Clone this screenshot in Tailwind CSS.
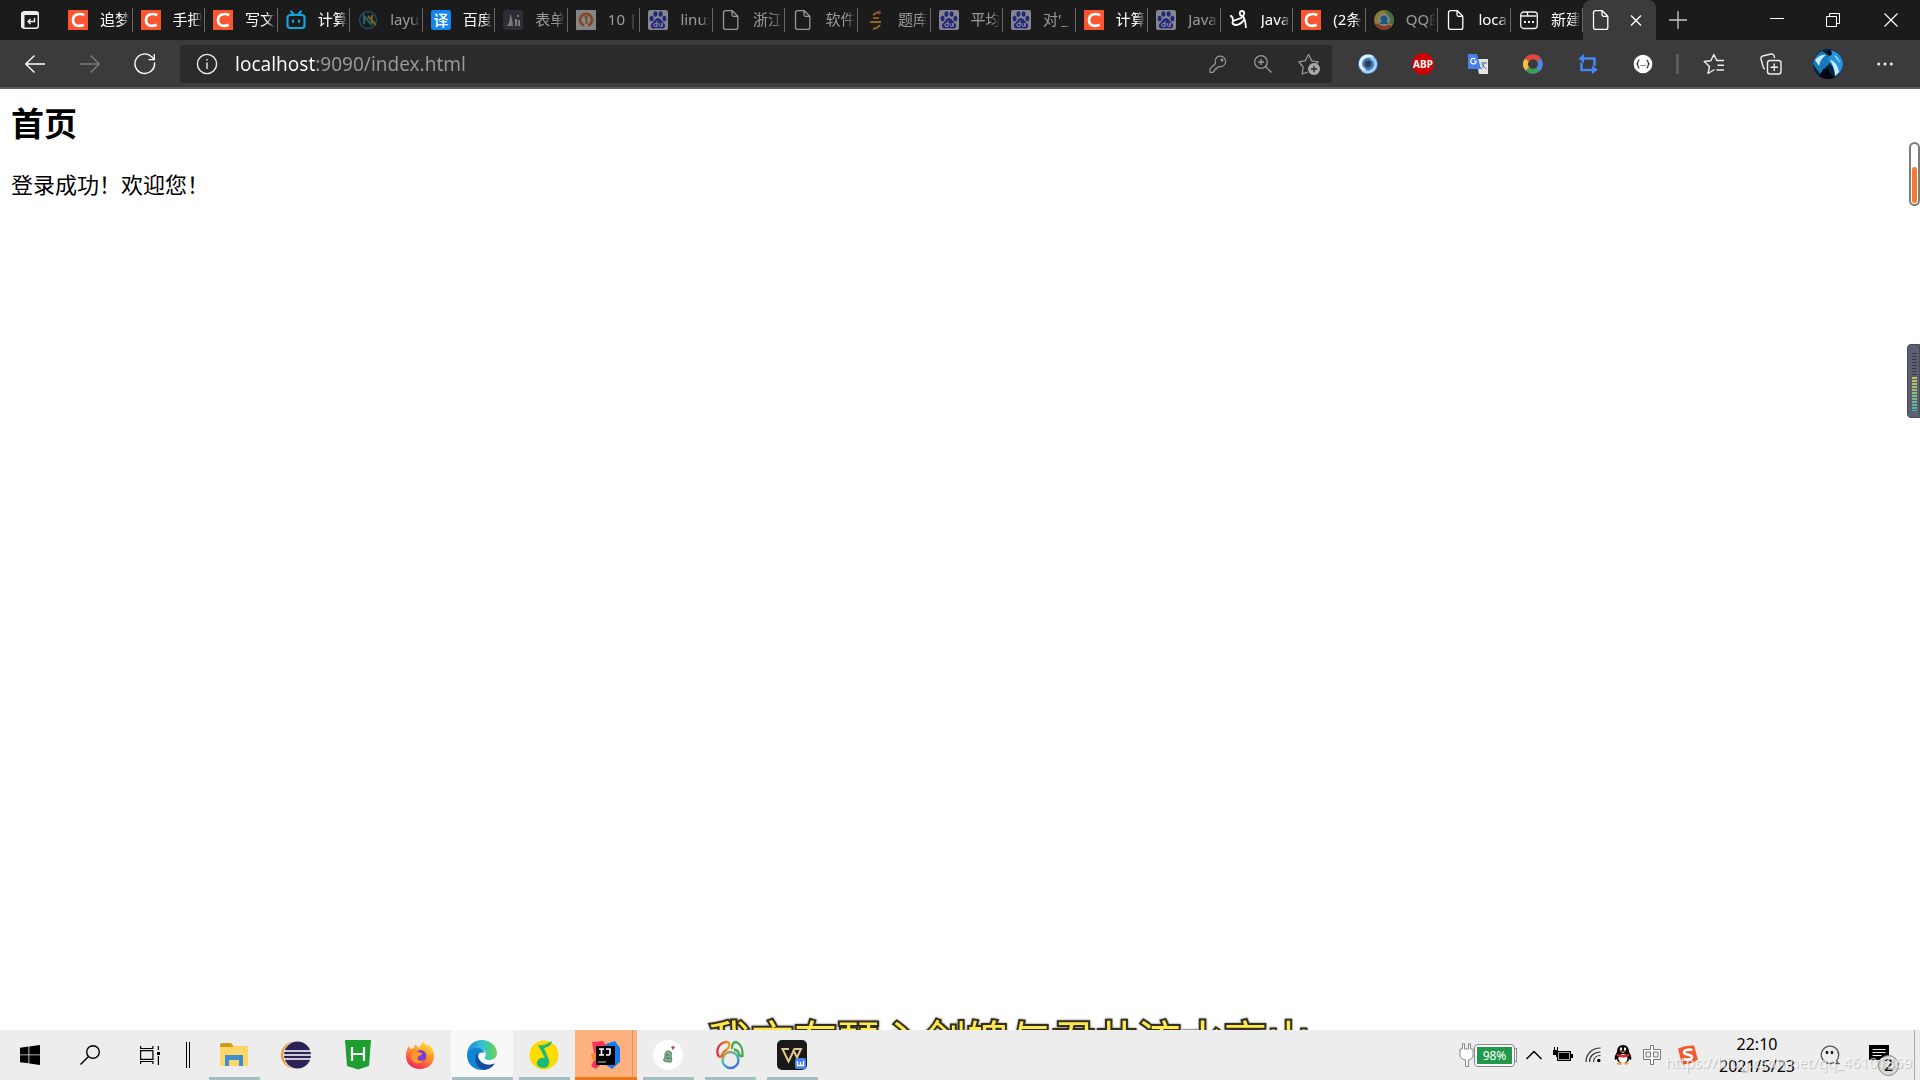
<!DOCTYPE html>
<html lang="zh-CN">
<head>
    <meta charset="UTF-8">
    <meta name="viewport" content="width=device-width, initial-scale=1.0">
    <title>首页</title>
    <script src="https://cdn.jsdelivr.net/npm/@tailwindcss/browser@4"></script>
</head>
<body class="min-h-screen flex flex-col bg-white text-black font-['Noto_Sans','Noto_Sans_CJK_SC',sans-serif]">
    <!-- shared icons -->
    <svg class="hidden">
        <symbol id="csdn" viewBox="0 0 20 20"><path fill="#fc5531" d="M0 0h20v20H0z"/><path fill="none" stroke="#fff" stroke-width="2.600" d="M16.300 5.200C11.500 2.800 5 4 5 10.300c0 5.700 5.500 6.700 10.800 4.400"/></symbol>
        <symbol id="doc" viewBox="0 0 20 20"><path fill="none" stroke="currentColor" stroke-width="1.300" stroke-linejoin="round" d="M4.500.7h6.800l5.500 5.500v11.300a2 2 0 0 1-2 2H4.500a2 2 0 0 1-2-2V2.700a2 2 0 0 1 2-2zM11 .7v4.100a1.500 1.500 0 0 0 1.500 1.500h4.300"/></symbol>
        <symbol id="baidu" viewBox="0 0 20 20"><rect width="20" height="20" rx="2" fill="#dcdcee"/><g fill="#2932c8"><ellipse cx="3.600" cy="8.500" rx="2" ry="2.700"/><ellipse cx="7.400" cy="4" rx="2" ry="2.800"/><ellipse cx="12.600" cy="4" rx="2" ry="2.800"/><ellipse cx="16.400" cy="8.500" rx="2" ry="2.700"/><path d="M10 8c2.500 0 3.500 3 5.500 4.700 3 2.500 1.500 6-1.500 5.800-2-.2-6-.2-8 0-3 .2-4.500-3.300-1.500-5.800C6.500 11 7.500 8 10 8z"/></g><path fill="none" stroke="#fff" stroke-width="1" d="M9 11v5.500H7.300a1.500 1.500 0 0 1 0-3H9M11.200 13v2.300c0 1.500 2.800 1.500 2.800 0V13v3.800"/></symbol>
    </svg>

    <header class="text-white">
        <div class="flex h-10 bg-[#1b1b1b]">
            <button class="w-[60px] flex justify-center items-center shrink-0" aria-label="标签操作">
                <svg class="w-5 h-5" viewBox="0 0 20 20" fill="none" stroke="#eee" stroke-width="1.400"><rect x="1.700" y="1.700" width="16.600" height="16.600" rx="2.500"/><path d="M1.700 3.500h16.600" stroke-width="3"/><path d="M3 4v14" stroke-width="3"/><path d="M14.500 8v3.500H8m2.500-2.500L8 11.500l2.500 2.500"/></svg>
            </button>
            <nav class="flex flex-1 min-w-0" id="tabs"></nav>
            <div class="flex w-[264px] shrink-0 items-center">
                <button class="w-11 flex justify-center" aria-label="新建标签页"><svg class="w-5 h-5" viewBox="0 0 20 20" stroke="#c8c8c8" stroke-width="1.300"><path d="M10 1v18M1 10h18"/></svg></button>
                <div class="flex-1"></div>
                <button class="w-14 flex justify-center" aria-label="最小化"><svg class="w-3.5 h-3.5" viewBox="0 0 14 14" stroke="#fff"><path d="M0 5.500h14"/></svg></button>
                <button class="w-14 flex justify-center" aria-label="还原"><svg class="w-3.5 h-3.5" viewBox="0 0 14 14" stroke="#fff" fill="none"><path d="M.5 3.500h10v10H.5zM3.500 3.500v-3h10v10h-3"/></svg></button>
                <button class="w-[59px] flex justify-center" aria-label="关闭"><svg class="w-3.5 h-3.5" viewBox="0 0 14 14" stroke="#fff" stroke-width="1.200"><path d="M.5.5l13 13M13.500.5l-13 13"/></svg></button>
            </div>
        </div>

        <div class="flex items-center h-[49px] px-[7px] bg-[#3b3b3b] border-b-2 border-[#5c5c5c]">
            <button class="w-[55px] flex justify-center" aria-label="后退"><svg class="w-5 h-5" viewBox="0 0 20 20" fill="none" stroke="#fff" stroke-width="1.300"><path d="M20 10H.8M9.500 1.500L.8 10l8.700 8.500"/></svg></button>
            <button class="w-[55px] flex justify-center" aria-label="前进"><svg class="w-5 h-5" viewBox="0 0 20 20" fill="none" stroke="#7d7d7d" stroke-width="1.300"><path d="M0 10h19.200M10.500 1.500l8.700 8.500-8.700 8.500"/></svg></button>
            <button class="w-[55px] flex justify-center" aria-label="刷新"><svg class="w-[22px] h-[22px]" viewBox="0 0 22 22" fill="none" stroke="#fff" stroke-width="1.400"><path d="M20.500 9.500A9.800 9.800 0 1 1 17.600 3.700L20 6M20.300 1v5.600h-5.800"/></svg></button>
            <div class="flex flex-1 items-center h-[38px] mx-2 pl-4 rounded bg-[#2b2b2b]">
                <svg class="w-[22px] h-[22px]" viewBox="0 0 22 22" fill="none" stroke="#eee" stroke-width="1.400"><circle cx="11" cy="11" r="9.600"/><path d="M11 9.500V16M11 6v1.600"/></svg>
                <input type="text" aria-label="地址" value="localhost:9090/index.html" class="flex-1 min-w-0 ml-[17px] text-[19px] leading-7 outline-none text-transparent bg-clip-text bg-[linear-gradient(to_right,#fff_80px,#9a9a9a_80px)]">
                <button class="w-[45px] flex justify-center" aria-label="密码"><svg class="w-[18px] h-[18px]" viewBox="0 0 18 18" fill="none" stroke="#999" stroke-width="1.200"><path d="M6.500 8.500A5.300 5.300 0 1 1 10 11.500L8.500 13H7v1.500H5.500V16L4 17.300H1v-3.500z" stroke-linejoin="round"/><circle cx="13" cy="5" r=".9"/></svg></button>
                <button class="w-[45px] flex justify-center" aria-label="缩放"><svg class="w-[18px] h-[18px]" viewBox="0 0 18 18" fill="none" stroke="#999" stroke-width="1.300"><circle cx="7" cy="7" r="6.300"/><path d="M11.500 11.500l6 6M7 4v6M4 7h6"/></svg></button>
                <button class="w-[47px] flex justify-center" aria-label="收藏"><svg class="w-[22px] h-[22px]" viewBox="0 0 22 22" fill="none" stroke="#999" stroke-width="1.300"><path d="M10 19l-5.800 2 .9-7L.9 8.800l6.300-1L10.500 1.500l3.200 6.300 6.500 1-2.600 2.700" stroke-linejoin="round"/><circle cx="16" cy="16" r="6" fill="#aaa" stroke="none"/><path d="M16 12.800v6.400M12.800 16h6.400" stroke="#2b2b2b"/></svg></button>
            </div>
            <button class="w-[55px] flex justify-center" aria-label="扩展"><svg class="w-5 h-5" viewBox="0 0 20 20" fill="none"><circle cx="10" cy="10" r="10" fill="#3c7cc0"/><path d="M15 3.500A8 8 0 0 0 3 7c-1.500 5 1 8.500 4.500 9.500" stroke="#e2f1fc" stroke-width="3.200"/><path d="M5 16.500A8 8 0 0 0 17 13c1.500-5-1-8.500-4.500-9.500" stroke="#a9d0f2" stroke-width="3"/><path d="M6.500 9.500q1-4 6-2.500 2 4-1 6-4 2-5-3.500z" fill="#333b4c"/></svg></button>
            <button class="w-[55px] flex justify-center" aria-label="ABP"><svg class="w-[22px] h-[22px]" viewBox="0 0 22 22"><path fill="#d00000" d="M6.500.5h9l6 6v9l-6 6h-9l-6-6v-9z"/><text x="11" y="14.500" text-anchor="middle" fill="#fff" class="text-[10px] font-bold">ABP</text></svg></button>
            <button class="w-[55px] flex justify-center" aria-label="翻译"><svg class="w-5 h-5" viewBox="0 0 20 20"><path fill="#e4e4e4" d="M8 5h12v15H11z"/><path fill="#4a80e8" d="M0 0h9l4 15H0z"/><path d="M8.500 7H6M8.300 7a2.800 2.800 0 1 1-1-2" fill="none" stroke="#fff" stroke-width="1.200"/><path d="M13 9h6M16 8v1c0 2-1.500 5-3 6M14 10c1 2 3 4 4.500 5" fill="none" stroke="#557a90"/></svg></button>
            <button class="w-[55px] flex justify-center" aria-label="搜索扩展"><svg class="w-5 h-5" viewBox="0 0 20 20" fill="none" stroke-width="5"><path stroke="#e04a3c" d="M3.800 6a7.500 7.500 0 0 1 12.400 0"/><path stroke="#5188ee" d="M16.200 6a7.500 7.500 0 0 1-1.500 9.700"/><path stroke="#3c9d58" d="M14.700 15.700a7.500 7.500 0 0 1-10.400-.8"/><path stroke="#f3bc42" d="M4.300 14.900A7.500 7.500 0 0 1 3.800 6"/></svg></button>
            <button class="w-[55px] flex justify-center" aria-label="循环"><svg class="w-5 h-5" viewBox="0 0 20 20"><path d="M5 4.500h11.500V12M15 16H3.500V8.500" fill="none" stroke="#4486f4" stroke-width="2.600"/><path fill="#4486f4" d="M6 0v9L.5 4.500zM14 11.500v8.500l6-4.300z"/></svg></button>
            <button class="w-[55px] flex justify-center" aria-label="JSON"><svg class="w-5 h-5" viewBox="0 0 20 20"><circle cx="10" cy="10" r="9.300" fill="#fff"/><path d="M6.500 6C4 6 6 9 4 10c2 1 0 4 2.500 4M13.500 6c2.500 0 .5 3 2.500 4-2 1 0 4-2.500 4" fill="none" stroke="#222" stroke-width="1.200"/><path d="M7.500 11.500h5" stroke="#222" stroke-width="1.200" stroke-dasharray="1 1"/></svg></button>
            <div class="w-[3px] h-5 mx-1.5 bg-[#5c5c5c]"></div>
            <button class="w-[57px] flex justify-center" aria-label="收藏夹"><svg class="w-[22px] h-[22px]" viewBox="0 0 22 22" fill="none" stroke="#eee" stroke-width="1.400" stroke-linejoin="round"><path d="M11.500 16.500L5 20.500l1.500-7L1.200 8.500l6.600-.8 3-6.200 3 6H21M14.500 12.200H21M13.500 17H21"/></svg></button>
            <button class="w-[57px] flex justify-center" aria-label="集锦"><svg class="w-[22px] h-[22px]" viewBox="0 0 22 22" fill="none" stroke="#eee" stroke-width="1.400"><rect x="7.500" y="7.500" width="13.500" height="13.500" rx="2.500"/><path d="M14.200 10.500v7.500M10.500 14.200H18M5 16c-1-.3-1.500-1-1.800-2L1 6c-.3-1.500.3-2.600 1.600-3L11 1c1.500-.3 2.500.3 3 1.600l.6 2.400"/></svg></button>
            <button class="w-[57px] flex justify-center" aria-label="个人资料"><svg class="w-[30px] h-[30px]" viewBox="0 0 30 30"><circle cx="15" cy="15" r="15" fill="#06233c"/><path d="M0 15C1 8 5 4 9 2l6 4 2 8-4 4-6 7z" fill="#1878b8"/><path d="M17 1c7 1 12 6 13 13 0 6-3 10-7 13l-3-9-5-7z" fill="#2394dc"/><path d="M2 11c3-4 8-6 11-5-4 3-6 6-7 11zM17 11c5 1 8 6 9 12l-4 4c0-6-2-11-5-16zM21 6c3 1 5 4 6 8z" fill="#c4ecfd"/><path d="M6 27l5-8 2 2 1-4 3 7 4 5q-8 3-15-2zM13 3l4 4 2-2-1-4z" fill="#020810"/></svg></button>
            <button class="w-[57px] flex justify-center" aria-label="更多"><svg class="w-4 h-4" viewBox="0 0 16 16" fill="#eee"><circle cx="1.700" cy="8" r="1.500"/><circle cx="8" cy="8" r="1.500"/><circle cx="14.300" cy="8" r="1.500"/></svg></button>
        </div>
    </header>

    <main class="relative flex-1 overflow-hidden pt-3 px-[11px]">
        <h2 class="text-[33px] leading-[46px] font-bold">首页</h2>
        <p class="mt-[22px] text-[22px] leading-[30px]">登录成功！欢迎您！</p>

        <!-- desktop widgets floating over the page -->
        <div class="absolute right-0 top-[53px] w-[11px] h-16 rounded-full border-2 border-[#7d7d7d] bg-white flex items-end p-px">
            <div class="w-full h-9 rounded-full bg-[#f47a2c]"></div>
        </div>
        <div class="absolute right-0 top-[255px] w-[13px] h-[74px] rounded-l bg-[#5b5f70] border border-[#464a5c] pl-1 pr-0.5 py-2">
            <div class="h-[23px] bg-[repeating-linear-gradient(#343848_0_1px,#5b5f70_1px_3px)]"></div>
            <div class="h-[35px] bg-[repeating-linear-gradient(#5b5f70_0_1px,transparent_1px_3px),linear-gradient(#c8c450,#8cc070,#45b8a0)]"></div>
        </div>
        <p class="absolute left-[708px] bottom-[-36px] whitespace-nowrap text-[43px] leading-[50px] text-[#ffe94e] [-webkit-text-stroke:4px_#33301f] [paint-order:stroke_fill] drop-shadow-[0_0_1px_#777]">我亦有琴心剑魄与君共流水高山</p>
    </main>

    <footer class="relative flex h-[50px] bg-[#ededed]">
        <button class="w-[60px] flex justify-center items-center" aria-label="开始"><svg class="w-5 h-5" viewBox="0 0 20 20"><path d="M0 2.800L8.500 1.500v8H0zM9.300 1.400L20 0v9.500H9.300zM0 10.300h8.500v8L0 17.200zM9.300 10.300H20V20L9.300 18.500z"/></svg></button>
        <button class="w-[60px] flex justify-center items-center" aria-label="搜索"><svg class="w-5 h-5" viewBox="0 0 20 20" fill="none" stroke="#000" stroke-width="1.400"><circle cx="13" cy="7" r="6.300"/><path d="M8.500 11.500L.5 19.500"/></svg></button>
        <button class="w-[60px] flex justify-center items-center" aria-label="任务视图"><svg class="w-5 h-5" viewBox="0 0 20 20" fill="none" stroke="#000" stroke-width="1.200"><path d="M.6 5.600h12.300v8.800H.6zM.6 1v2.500h12.300V1M.6 19v-2.500h12.300V19M18.400 1v4M18.400 11v9"/><path d="M17 7h3v3h-3z" fill="#000" stroke="none"/></svg></button>
        <div class="w-[23px] flex items-center pl-1.5"><div class="w-1 h-[26px] border-x border-black"></div></div>

        <div class="flex *:w-[62px] *:h-[50px] *:flex *:items-center *:justify-center *:relative">
            <button aria-label="文件资源管理器">
                <svg class="w-7 h-7" viewBox="0 0 28 28"><path fill="#d29b18" d="M0 3.500Q0 2 1.500 2H11l2.500 3H28v5H0z"/><path fill="#fcd667" d="M0 6h12l2-1h14v20H0z"/><path fill="#3b8ed0" d="M5 14h18v11h-4v-6h-10v6H5z"/></svg>
                <span class="absolute bottom-0 w-[51px] h-[3px] bg-[#a3bfc4]"></span>
            </button>
            <button aria-label="Eclipse"><svg class="w-[30px] h-[30px]" viewBox="0 0 30 30"><circle cx="13.500" cy="15" r="13.500" fill="#f0962a"/><circle cx="16.500" cy="15" r="14.300" fill="#ededed"/><circle cx="16.500" cy="15" r="13.500" fill="#2c2255"/><path d="M3 11h27M3 15h27M3 19h27" stroke="#fff" stroke-width="1.500"/></svg></button>
            <button aria-label="HBuilder"><svg class="w-7 h-[30px]" viewBox="0 0 28 30"><path fill="#1d9e2f" d="M1 0h26l-2 26-11 3.500L3 26z"/><path d="M8 7v14M20 7v14M8 14h12" stroke="#fff" stroke-width="2.200"/></svg></button>
            <button aria-label="Firefox">
                <svg class="w-[30px] h-[30px]" viewBox="0 0 30 30"><defs><linearGradient id="fx" x1=".8" y1="0" x2=".3" y2="1"><stop offset="0" stop-color="#fff04a"/><stop offset=".45" stop-color="#ff9626"/><stop offset="1" stop-color="#f5225f"/></linearGradient></defs><path fill="url(#fx)" d="M4 6l1 3 4-1 1-4 4 4 4-7c2 2 3 4 3 5l2-2c5 4 6 8 6 12 0 8-6 13-14 13S1 24 1 16c0-4 1-7 3-10z"/><circle cx="15.500" cy="16" r="6" fill="#7a3fd0"/><path fill="#ff9a2b" d="M8 12c3-2 6 1 9 1 0 3-3 2-4 4-2 3 3 5 6 3-4 6-13 3-13-3 0-2 1-4 2-5z"/></svg>
            </button>
            <button class="bg-[#f8f8f8]" aria-label="Edge">
                <svg class="w-[30px] h-[30px]" viewBox="0 0 30 30"><defs><linearGradient id="eg" x2="1"><stop offset="0" stop-color="#1587d6"/><stop offset=".5" stop-color="#34c0d2"/><stop offset="1" stop-color="#68d64e"/></linearGradient></defs><path fill="#1284d8" d="M0 15c0-5 5-8 10-8 4 0 7 3 7 6-4-2-7 2-6 6 1 6 6 9 11 9-2 1-4 2-7 2C7 30 0 24 0 15z"/><path fill="url(#eg)" d="M0 14C1 5 7 0 15 0c9 0 15 7 15 13 0 5-4 7-8 7-3 0-5-1-4-3 3-5-3-9-8-9C5 8 1 10 0 14z"/><path fill="#124f9c" d="M10 13c-4 5-1 16 8 17 4-1 8-3 10-7-5 3-13 2-16-4-1-2-1-4-2-6z"/></svg>
                <span class="absolute bottom-0 w-[61px] h-[3px] bg-[#a3bfc4]"></span>
            </button>
            <button aria-label="QQ音乐">
                <svg class="w-[30px] h-[30px]" viewBox="0 0 30 30"><circle cx="15" cy="15" r="14.500" fill="#fcdc00"/><path fill="#1db877" d="M9 5c6 1 9-1 14-4-1 4-3 6-8 7l5 12c1 4-1 8-5 8-5 0-8-3-7-6 1-4 5-5 8-4z"/></svg>
                <span class="absolute bottom-0 w-[51px] h-[3px] bg-[#a3bfc4]"></span>
            </button>
            <button class="bg-[#fcb17f]" aria-label="IntelliJ IDEA">
                <svg class="w-[30px] h-[30px]" viewBox="0 0 30 30"><path fill="#fb315b" d="M1 2l11-1 5 7-5 14-7 7-5-3 4-8z"/><path fill="#fa8a2a" d="M0 14l6-2v10l-5-3z"/><path fill="#137cf0" d="M15 4l9-3 5 7v14l-8 7-9-6z"/><path d="M5 6h19v19H5z"/><path d="M8 9h5M10.500 9v6M8 15h5M15 9h4v4.500q0 1.500-1.500 1.500H15" fill="none" stroke="#fff" stroke-width="1.600"/><path d="M7 22h8" stroke="#ccc"/></svg>
                <span class="absolute bottom-0 w-full h-[3px] bg-[#ec7514]"></span>
                <span class="absolute right-1 top-0 w-px h-[47px] bg-[#d99868]"></span>
            </button>
            <button aria-label="宠物">
                <svg class="w-[30px] h-[30px]" viewBox="0 0 30 30"><circle cx="15" cy="15" r="15" fill="#fff"/><path fill="#7eb090" stroke="#4d7c64" d="M11 21c-1-2 1-3 1-5s0-5 3-5c4 0 4 3 3 5 1 2 1 4 0 6-2 0-5 0-7-1z"/><path d="M13 15h3M13 18h4" stroke="#3f6653"/><path fill="#b34548" d="M18 7l2-1 2 1-2 3z"/></svg>
                <span class="absolute bottom-0 w-[51px] h-[3px] bg-[#a3bfc4]"></span>
            </button>
            <button aria-label="Navicat">
                <svg class="w-[30px] h-[30px]" viewBox="0 0 30 30" fill="none" stroke-width="2.300"><defs><linearGradient id="nv" x2=".7" y2="1"><stop offset="0" stop-color="#f08a20"/><stop offset=".5" stop-color="#35c0c0"/><stop offset="1" stop-color="#4468f0"/></linearGradient><linearGradient id="nl" x2="1" y2="0"><stop offset="0" stop-color="#d8304c"/><stop offset="1" stop-color="#f49a20"/></linearGradient></defs><circle cx="15.500" cy="20" r="8" stroke="url(#nv)"/><path stroke="url(#nl)" d="M4 17C0 10 4 3 11 2c5-.5 4 5 .5 8"/><path stroke="#4aa84c" d="M17 9c0-4 1.500-7 4-7 5 2 7 8 6.500 14q-3 1-3.500-2-1-4-5-4.500"/><path stroke="#e86a28" d="M4 17q3 0 3.500-3 1-3 4-4"/></svg>
                <span class="absolute bottom-0 w-[51px] h-[3px] bg-[#a3bfc4]"></span>
            </button>
            <button aria-label="WPS">
                <svg class="w-[30px] h-[30px]" viewBox="0 0 30 30"><rect width="30" height="30" rx="5" fill="#191919"/><path d="M12 9H5.500l6 12.500L17.500 9H24l-4 8.500L16 9.500" fill="none" stroke="#e5c690" stroke-width="2"/><rect x="18" y="18" width="11" height="11" rx="2" fill="#4d83e8"/><path d="M20.500 21v4.500h6V21M23.500 22v3" fill="none" stroke="#fff" stroke-width="1.300"/></svg>
                <span class="absolute bottom-0 w-[51px] h-[3px] bg-[#a3bfc4]"></span>
            </button>
        </div>

        <div class="ml-auto flex items-center">
            <div class="flex items-center mr-0.5">
                <svg class="w-[15px] h-6" viewBox="0 0 15 24" fill="#fff" stroke="#888"><path d="M3.500 6V.8h2V6h4V.8h2V6H14v6q0 4-4.500 5v6.500h-3V17Q1 16 1 12V6z"/></svg>
                <div class="w-[41px] h-[23px] p-0.5 rounded-sm border border-[#888] bg-white"><div class="h-full bg-[#20994b] text-white text-xs leading-[17px] text-center">98%</div></div>
                <div class="w-0.5 h-3.5 border-y border-r border-[#888] bg-white"></div>
            </div>
            <button class="w-[29px] flex justify-center" aria-label="显示隐藏的图标"><svg class="w-4 h-2.5" viewBox="0 0 16 10" fill="none" stroke="#000" stroke-width="1.500"><path d="M.5 9L8 1.500 15.500 9"/></svg></button>
            <button class="w-[30px] flex justify-center" aria-label="电源"><svg class="w-5 h-4" viewBox="0 0 20 16"><path d="M5 4h13v3h2v4h-2v3H4v-4H3V8H0V3h1V0h1v3h2V0h1z"/><path d="M5.500 5.500h11v7h-11z" stroke="#ededed" fill="#000" stroke-width=".7"/></svg></button>
            <button class="w-[30px] flex justify-center" aria-label="网络"><svg class="w-4 h-4" viewBox="0 0 16 16" fill="none" stroke="#333" stroke-width="1.200"><path d="M1 15C1 7 7 1 15.500 1M4.500 15c0-6 4.500-10 11-10M8.500 15c0-4 3-6.500 7-6.500"/><circle cx="13.800" cy="13.500" r="1.700" fill="#000" stroke="none"/></svg></button>
            <button class="w-[29px] flex justify-center" aria-label="QQ"><svg class="w-[18px] h-5" viewBox="0 0 18 20"><path d="M9 0c4 0 6 3 6 7 2 3 3 6 2 8l-2-1c0 2-2 4-6 4s-6-2-6-4l-2 1c-1-2 0-5 2-8 0-4 2-7 6-7z"/><ellipse cx="9" cy="13.500" rx="4.500" ry="4.500" fill="#fff"/><path d="M3 8.500q6 3 12 0v2.500q-6 3-12 0z" fill="#ea2020"/><ellipse cx="7" cy="4" rx="1.200" ry="1.700" fill="#fff"/><ellipse cx="11" cy="4" rx="1.200" ry="1.700" fill="#fff"/><path d="M5.500 6.500h7L9 8z" fill="#fbac18"/><path d="M3 18q3-2 5 1-2 2-5 0zM10 19q2-3 5-1-2 3-5 1z" fill="#ef9d1a"/></svg></button>
            <button class="w-[29px] flex justify-center" aria-label="输入法"><svg class="w-[18px] h-5" viewBox="0 0 18 20" fill="#fff" stroke="#777"><path fill-rule="evenodd" d="M7.500.5h3v4h7v10h-7v5h-3v-5h-7v-10h7zM3 7v5h4.500V7zM10.500 7v5H15V7z"/></svg></button>
            <button class="w-[44px] flex justify-center" aria-label="搜狗输入法"><svg class="w-5 h-5" viewBox="0 0 20 20"><path fill="#f15a30" d="M0 3.500Q8 0 16 .5L20 15q-7 4-16 4.500z"/><path d="M14.500 5C10 4 6 5 6 7.500s8 1.500 8 4.500-5 3-8.500 2" fill="none" stroke="#fff" stroke-width="2.600"/></svg></button>
            <div class="w-[94px] text-center text-base leading-[22px]">22:10<br>2021/5/23</div>
            <button class="w-[52px] flex justify-center" aria-label="聊天"><svg class="w-5 h-5" viewBox="0 0 20 20" fill="none" stroke="#555" stroke-width="1.300"><path d="M14 17.500A8.700 8.700 0 1 1 18.700 10c0 3-1 4.500-2 5.500 0 2 1 2.500 2 3-2 .3-4 0-4.700-1z"/><ellipse cx="7" cy="7.500" rx="1.300" ry="1.800" fill="#111" stroke="none"/><ellipse cx="12" cy="7.500" rx="1.300" ry="1.800" fill="#111" stroke="none"/></svg></button>
            <button class="w-[59px] h-[50px] flex items-center pl-[13px] relative border-r border-[#aaa]" aria-label="通知">
                <svg class="w-5 h-5" viewBox="0 0 20 20"><path d="M0 0h20v15h-5v4l-4-4H0z"/><path d="M3.500 4.500h13M3.500 7.500h13M3.500 10.500h9" stroke="#ededed"/></svg>
                <span class="absolute right-[15px] bottom-1 w-[21px] h-[21px] rounded-full border border-[#888] bg-[#d8d8d8] text-base leading-[19px]">2</span>
            </button>
            <div class="w-[5px]"></div>
        </div>
        <p class="absolute right-2 bottom-1.5 text-[15px] leading-6 text-white/70 [text-shadow:1px_1px_1px_rgb(0_0_0/0.2)] pointer-events-none">https://blog.csdn.net/qq_46101869</p>
    </footer>

    <script>
        const icons = {
            csdn: '<use href="#csdn"/>',
            doc: '<use href="#doc"/>',
            baidu: '<use href="#baidu"/>',
            bili: '<g fill="none" stroke="#13a5dc" stroke-width="2.200" stroke-linecap="round"><rect x="1.500" y="5" width="17" height="13" rx="2.500"/><path d="M5 1.500l3 3M15 1.500l-3 3M7 10.500v1.500M13 10.500v1.500"/></g>',
            layui: '<circle cx="10" cy="10" r="8.500" fill="none" stroke="#2b6c96" stroke-width="1.500"/><path d="M6 14V6l8 9" fill="none" stroke="#2aa09a" stroke-width="2.200"/><path d="M10 6l8 9M14 5v8" stroke="#c59c35" stroke-width="2"/>',
            fanyi: '<rect width="20" height="20" rx="2.500" fill="#1485ee"/><text x="10" y="15.500" text-anchor="middle" fill="#fff" class="text-[15px] font-medium">译</text>',
            form: '<rect width="20" height="20" rx="2.500" fill="#3a3d4c"/><path d="M3 16q4-1 4-12 2 2 3 12zM12 16V9h2v7zM15 10v6h2v-6zM14 5h2v2h-2z" fill="#c5c9d0"/>',
            ten: '<path d="M0 0h20v20H0z" fill="#dcdcdc"/><path d="M8 15.500a6 6 0 1 1 4 0" fill="none" stroke="#d6702a" stroke-width="2.800"/><path d="M8.500 7h2v7" fill="none" stroke="#d6702a" stroke-width="2"/>',
            tiku: '<path d="M7 5l5-3M4 12h11M7 19q5-1 7-4" fill="none" stroke="#f1ab25" stroke-width="2"/><path d="M7 8h6" stroke="#ef812f" stroke-width="2"/><circle cx="13" cy="2.500" r="2" fill="#f25858"/>',
            java: '<path d="M1 6q3 0 3 5l8-3q4-3 3-6-2-2-4 0-1 3 2 4 3 0 4 12M4 11q-2 4 4 4 6-2 7-6" fill="none" stroke="#fff" stroke-width="1.800"/>',
            qq: '<circle cx="10" cy="10" r="10" fill="#e9c850"/><path d="M10 0a10 10 0 0 1 9 14l-5-1V6z" fill="#66b55a"/><path d="M1 14a10 10 0 0 0 17 2l-6-2z" fill="#dd5839"/><circle cx="10" cy="10" r="6" fill="#ddd"/><circle cx="10" cy="9" r="3.500" fill="#2588d0"/><path d="M5 14q5-6 10 0z" fill="#2588d0"/>',
            blank: '<g fill="none" stroke="#eee" stroke-width="1.300"><rect x="1.700" y="2" width="16.600" height="16.500" rx="3"/><path d="M2 6h15.500M8 2l1 4"/></g><path d="M5 11h2v2H5zM9 11h2v2H9zM13 11h2v2h-2z" fill="#eee"/>'
        };

        // icon, title, sleeping
        const tabs = [
            ['csdn', '追梦', 0], ['csdn', '手把', 0], ['csdn', '写文', 0], ['bili', '计算', 0],
            ['layui', 'layui', 1], ['fanyi', '百度', 0], ['form', '表单', 1], ['ten', '10 |', 1],
            ['baidu', 'linux', 1], ['doc', '浙江', 1], ['doc', '软件', 1], ['tiku', '题库', 1],
            ['baidu', '平均', 1], ['baidu', "对'_", 1], ['csdn', '计算', 0], ['baidu', 'Java', 1],
            ['java', 'Java', 0], ['csdn', '(2条', 0], ['qq', 'QQ邮', 1], ['doc', 'local', 0],
            ['blank', '新建', 0]
        ];

        let html = '';
        for (const [icon, title, sleeping] of tabs) {
            html += `<button class="flex flex-1 min-w-0 items-center pl-2">
                <span class="flex flex-1 min-w-0 items-center gap-3 ${sleeping ? 'opacity-55' : ''}">
                    <svg class="w-5 h-5 shrink-0" viewBox="0 0 20 20">${icons[icon]}</svg>
                    <span class="flex-1 min-w-0 overflow-hidden whitespace-nowrap text-left text-[15px] leading-[22px] pb-0.5 mr-0.5 [mask-image:linear-gradient(to_right,#000_70%,transparent)]">${title}</span>
                </span>
                <span class="w-px h-6 bg-[#666]"></span>
            </button>`;
        }
        html += `<div class="flex flex-1 min-w-0 items-center pl-2 rounded-t-lg bg-[#3b3b3b]">
            <svg class="w-5 h-5" viewBox="0 0 20 20">${icons.doc}</svg>
            <button class="ml-4" aria-label="关闭标签页"><svg class="w-[18px] h-5" viewBox="0 0 18 20" stroke="#fff" stroke-width="1.400"><path d="M4 5.500l10 10M14 5.500l-10 10"/></svg></button>
        </div>`;
        document.getElementById('tabs').innerHTML = html;
    </script>
</body>
</html>
